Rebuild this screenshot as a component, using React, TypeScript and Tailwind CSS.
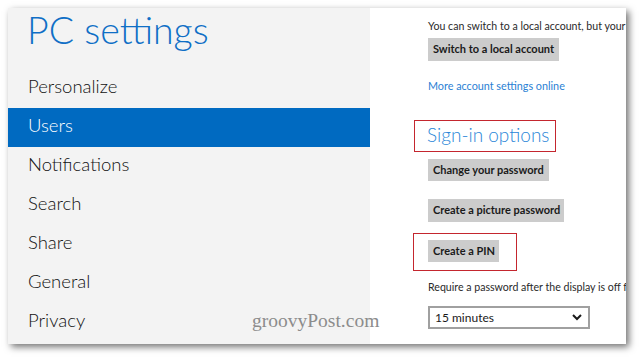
import React from "react";

const items = ["Personalize", "Users", "Notifications", "Search", "Share", "General", "Privacy"];

function Btn({ label, w, h }: { label: string; w: string; h: string }) {
  return (
    <div className={`${w} ${h} bg-[#cccccc] pl-[5px] flex items-center text-[11px] font-bold text-[#1a1a1a] whitespace-nowrap`}>
      {label}
    </div>
  );
}

export default function App() {
  return (
    <div className="w-[640px] h-[360px] bg-white pt-[8px] pl-[8px] relative overflow-hidden" style={{ fontFamily: 'Lato, "Open Sans", sans-serif' }}>
      <div className="w-[618px] h-[336px] flex overflow-hidden shadow-[3px_3px_7px_rgba(0,0,0,0.55)] bg-white">
        <div className="w-[362px] h-full bg-[#f3f3f3] flex flex-col">
          <div className="h-[61px] pl-[19px] pt-[2px] text-[37.5px] leading-[40px] font-light text-[#0f6fc6] whitespace-nowrap">PC settings</div>
          {items.map((it) => (
            <div
              key={it}
              className={`h-[39px] pl-[20px] text-[18.5px] leading-[35px] font-light whitespace-nowrap ${it === "Users" ? "bg-[#006ac1] text-white" : "text-[#111111]"}`}
            >
              {it}
            </div>
          ))}
        </div>
        <div className="flex-1 h-full bg-white pl-[58px] pt-[10px] flex flex-col items-start overflow-hidden">
          <div className="text-[10.6px] leading-[16px] text-[#2a2a2a] whitespace-nowrap">You can switch to a local account, but your info won't sync</div>
          <div className="mt-[4px]"><Btn label="Switch to a local account" w="w-[131px]" h="h-[23px]" /></div>
          <div className="mt-[17px] text-[10.8px] leading-[16px] text-[#2a7fd4] whitespace-nowrap">More account settings online</div>
          <div className="mt-[26px] ml-[-14px] w-[142px] h-[32px] border border-[#c4262e] pl-[12px] pt-[1px]">
            <div className="text-[19px] leading-[26px] font-light text-[#2a86d8] whitespace-nowrap">Sign-in options</div>
          </div>
          <div className="mt-[7px]"><Btn label="Change your password" w="w-[121px]" h="h-[22px]" /></div>
          <div className="mt-[18px]"><Btn label="Create a picture password" w="w-[136px]" h="h-[23px]" /></div>
          <div className="mt-[11px] ml-[-15px] w-[104px] h-[38px] border border-[#c4262e] pl-[14px] pt-[6px]">
            <Btn label="Create a PIN" w="w-[71px]" h="h-[22px]" />
          </div>
          <div className="mt-[8px] text-[10.6px] leading-[16px] text-[#2a2a2a] whitespace-nowrap">Require a password after the display is off for</div>
          <div className="mt-[11px] w-[162px] h-[23px] border-2 border-[#a0a0a0] flex items-center justify-between pl-[5px] pr-[6px] text-[12px] text-[#1a1a1a]">
            <span>15 minutes</span>
            <svg width="10" height="7" viewBox="0 0 10 7"><polyline points="1,1 5,5 9,1" fill="none" stroke="#1a1a1a" strokeWidth="2" /></svg>
          </div>
        </div>
      </div>
      <div className="absolute left-[252px] top-[309px] text-[19.5px] leading-[24px] text-[#8c8c8c] whitespace-nowrap" style={{ fontFamily: '"Liberation Serif", serif' }}>groovyPost.com</div>
    </div>
  );
}
